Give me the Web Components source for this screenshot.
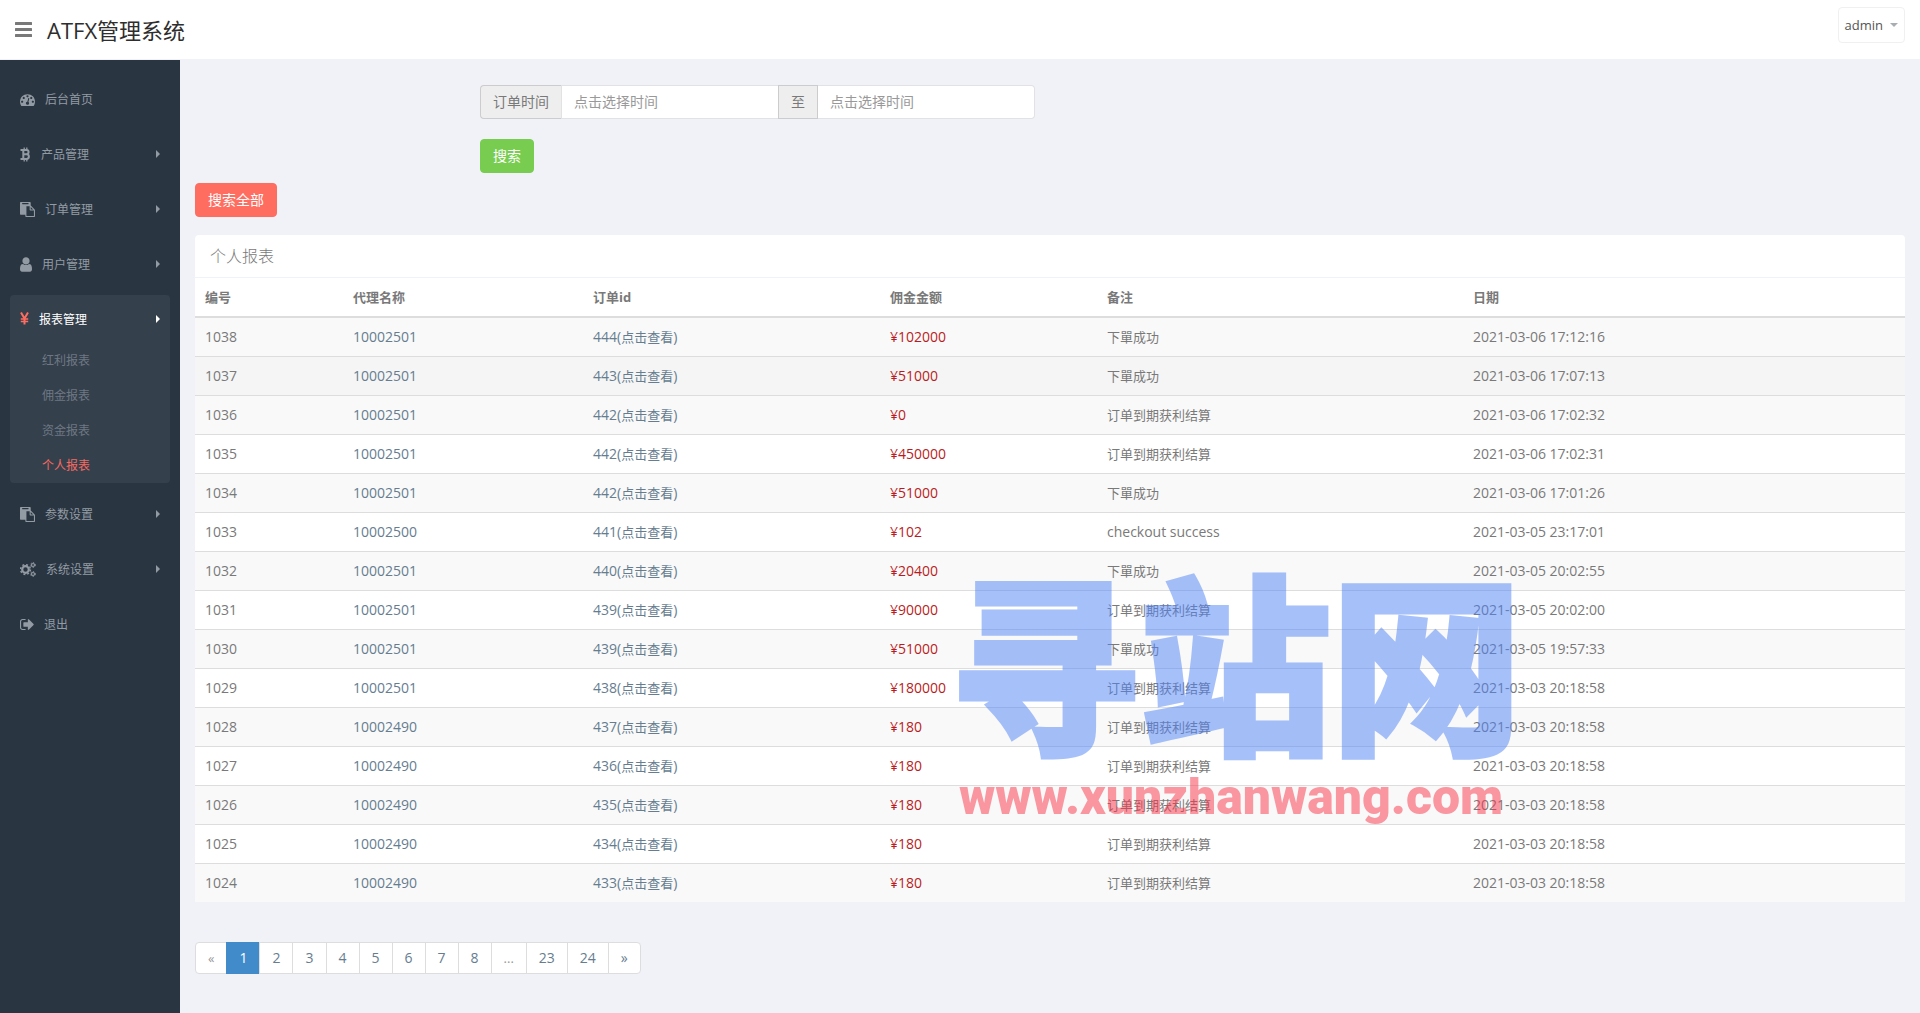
<!DOCTYPE html>
<html lang="zh-CN">
<head>
<meta charset="utf-8">
<title>ATFX管理系统</title>
<style>
body { margin: 0; font: 13px/20px "Open Sans", "Noto Sans CJK SC", sans-serif; color: #797979; background: #f1f2f7; }
</style>
</head>
<body>
<admin-page>
  <top-bar slot="top" user="admin">ATFX管理系统</top-bar>
  <side-menu slot="side">
    <menu-item icon="dashboard">后台首页</menu-item>
    <menu-item icon="bitcoin" more>产品管理</menu-item>
    <menu-item icon="paste" more>订单管理</menu-item>
    <menu-item icon="user" more>用户管理</menu-item>
    <menu-item icon="yen" more active>报表管理
      <sub-item slot="sub">红利报表</sub-item>
      <sub-item slot="sub">佣金报表</sub-item>
      <sub-item slot="sub">资金报表</sub-item>
      <sub-item slot="sub" active>个人报表</sub-item>
    </menu-item>
    <menu-item icon="paste" more>参数设置</menu-item>
    <menu-item icon="cogs" more>系统设置</menu-item>
    <menu-item icon="signout">退出</menu-item>
  </side-menu>
  <search-form></search-form>
  <report-card>个人报表</report-card>
  <page-nav></page-nav>
</admin-page>

<script>
const define = (name, html, setup) => customElements.define(name, class extends HTMLElement {
  constructor() {
    super();
    this.attachShadow({ mode: 'open' });
  }
  connectedCallback() {
    if (this.shadowRoot.childNodes.length) return;
    const base = '<style>*{box-sizing:border-box}a{text-decoration:none;color:inherit}button,input{font:inherit;margin:0}</style>';
    this.shadowRoot.innerHTML = base + (typeof html === 'function' ? html(this) : html);
    if (setup) setup(this);
  }
});

const icons = {
  dashboard: [15, '0 128 1792 1536', '<path d="M384 1152q0-53-37.5-90.5t-90.5-37.5-90.5 37.5-37.5 90.5 37.5 90.5 90.5 37.5 90.5-37.5 37.5-90.5zm192-448q0-53-37.5-90.5t-90.5-37.5-90.5 37.5-37.5 90.5 37.5 90.5 90.5 37.5 90.5-37.5 37.5-90.5zm428 481l101-382q6-26-7.5-48.5t-38.5-29.5-48 6.5-30 39.5l-101 382q-60 5-107 43.5t-63 98.5q-20 77 20 146t117 89 146-20 89-117q16-60-6-117t-72-91zm660-33q0-53-37.5-90.5t-90.5-37.5-90.5 37.5-37.5 90.5 37.5 90.5 90.5 37.5 90.5-37.5 37.5-90.5zm-640-640q0-53-37.5-90.5t-90.5-37.5-90.5 37.5-37.5 90.5 37.5 90.5 90.5 37.5 90.5-37.5 37.5-90.5zm448 192q0-53-37.5-90.5t-90.5-37.5-90.5 37.5-37.5 90.5 37.5 90.5 90.5 37.5 90.5-37.5 37.5-90.5zm320 448q0 261-141 483-19 29-54 29h-1402q-35 0-54-29-141-221-141-483 0-182 71-348t191-286 286-191 348-71 348 71 286 191 191 286 71 348z"/>'],
  bitcoin: [11, '0 0 11 15', '<path fill="none" stroke="currentColor" stroke-width="2" d="M.5 3H6.500a2 2 0 0 1 0 4.200H3.500M6.500 7.200a2.400 2.400 0 0 1 0 4.800H.5M3.300 3v9"/><path fill="none" stroke="currentColor" stroke-width="1.300" d="M4.200.5v2.500M6.800.5v2.500M4.200 12v2.500M6.800 12v2.500"/>'],
  paste: [15, '0 0 1792 1792', '<path d="M768 1664h896v-640h-416q-40 0-68-28t-28-68v-416h-384v1152zm256-1440v-64q0-13-9.500-22.500t-22.500-9.500h-704q-13 0-22.500 9.500t-9.500 22.500v64q0 13 9.500 22.500t22.500 9.500h704q13 0 22.500-9.500t9.500-22.500zm256 672h299l-299-299v299zm512 128v672q0 40-28 68t-68 28h-960q-40 0-68-28t-28-68v-160h-544q-40 0-68-28t-28-68v-1344q0-40 28-68t68-28h1088q40 0 68 28t28 68v328q21 13 36 28l408 408q28 28 48 76t20 88z"/>'],
  user: [12, '256 128 1280 1536', '<path d="M1536 1399q0 109-62.500 187t-150.500 78h-854q-88 0-150.500-78t-62.500-187q0-85 8.500-160.500t31.500-152 58.500-131 94-89 134.500-34.500q131 128 313 128t313-128q76 0 134.500 34.500t94 89 58.500 131 31.500 152 8.500 160.500zm-256-887q0 159-112.500 271.500t-271.500 112.500-271.500-112.500-112.500-271.500 112.500-271.500 271.500-112.500 271.500 112.500 112.500 271.500z"/>'],
  yen: [9, '0 0 9 14', '<path fill="none" stroke="currentColor" stroke-width="2" d="M1 0L4.500 6 8 0M4.500 5.500V12"/><path fill="none" stroke="currentColor" stroke-width="1.300" d="M.8 6.500h7.400M.8 9h7.400"/>'],
  cogs: [16, '0 0 16 15', '<g fill="none" stroke="currentColor"><circle cx="5.500" cy="7.500" r="3.300" stroke-width="2.200"/><circle cx="5.500" cy="7.500" r="4.900" stroke-width="1.500" stroke-dasharray="1.925 1.924"/><circle cx="13" cy="3" r="1.500" stroke-width="1.200"/><circle cx="13" cy="3" r="2.400" stroke-width="1" stroke-dasharray="1.257 1.256"/><circle cx="13" cy="12" r="1.500" stroke-width="1.200"/><circle cx="13" cy="12" r="2.400" stroke-width="1" stroke-dasharray="1.257 1.256"/></g>'],
  signout: [14, '64 256 1600 1280', '<path d="M704 1440q0 4 1 20t.5 26.500-3 23.500-10 19.500-20.500 6.500h-320q-119 0-203.500-84.500t-84.500-203.500v-704q0-119 84.500-203.500t203.500-84.500h320q13 0 22.500 9.500t9.500 22.500q0 4 1 20t.5 26.500-3 23.500-10 19.500-20.500 6.500h-320q-66 0-113 47t-47 113v704q0 66 47 113t113 47h312l11.500 1 11.500 3 8 5.500 7 9 2 13.500zm928-544q0 26-19 45l-544 544q-19 19-45 19t-45-19-19-45v-288h-448q-26 0-45-19t-19-45v-384q0-26 19-45t45-19h448v-288q0-26 19-45t45-19 45 19l544 544q19 19 19 45z"/>']
};
const icon = name => {
  const [w, box, body] = icons[name];
  return `<svg class="icon" width="${w}" height="15" viewBox="${box}" fill="currentColor" aria-hidden="true">${body}</svg>`;
};

define('admin-page', `
<style>
:host { display: grid; grid-template: auto 1fr / 180px minmax(0, 1fr); min-height: 100vh; }
slot[name=top] { display: block; grid-column: 1 / -1; }
slot[name=side] { display: block; background: #2a3542; }
main { padding: 25px 15px 0; }
</style>
<slot name="top"></slot><slot name="side"></slot><main><slot></slot></main>`);

define('top-bar', el => `
<style>
:host { display: block; }
header { display: flex; align-items: center; gap: 15px; height: 60px; padding: 0 15px; background: #fff; border-bottom: 1px solid #f1f2f7; }
button { border: 0; background: none; cursor: pointer; }
.toggle { padding: 0; color: #797979; display: flex; }
.name { font-size: 22px; line-height: 30px; color: #2e2e2e; }
.user { display: flex; align-items: center; gap: 7px; height: 36px; margin: 0 0 10px auto; padding: 0 6px; border: 1px solid #f0f0f0; border-radius: 4px; color: #555; }
</style>
<header>
  <button class="toggle" aria-label="菜单"><svg width="17" height="15" viewBox="0 0 17 15" fill="currentColor"><rect width="17" height="3" y="0" rx=".5"/><rect width="17" height="3" y="6" rx=".5"/><rect width="17" height="3" y="12" rx=".5"/></svg></button>
  <a class="name" href="#"><slot></slot></a>
  <button class="user">${el.getAttribute('user')}<svg width="8" height="4" viewBox="0 0 8 4" fill="#a9adb1" aria-hidden="true"><path d="M0 0h8L4 4z"/></svg></button>
</header>`);

define('side-menu', `
<style>
:host { display: block; }
nav { display: flex; flex-direction: column; gap: 7px; padding: 15px 10px; font-size: 12px; color: #929ba3; }
</style>
<nav><slot></slot></nav>`);

define('menu-item', el => `
<style>
:host { display: block; border-radius: 4px; }
:host([active]) { background: #35404d; }
a { display: flex; align-items: center; gap: 10px; height: 48px; padding: 0 10px; }
a span { padding-top: 2px; }
:host([active]) a { color: #fff; }
:host([active]) .icon { color: #ff6c60; }
.caret { margin-left: auto; }
</style>
<a href="#">${icon(el.getAttribute('icon'))}<span><slot></slot></span>${el.hasAttribute('more') ? '<svg class="caret" width="4" height="8" viewBox="0 0 4 8" fill="currentColor" aria-hidden="true"><path d="M0 0v8l4-4z"/></svg>' : ''}</a>
<slot name="sub"></slot>`);

define('sub-item', `
<style>
:host { display: block; color: #6e7883; }
:host([active]) { color: #f76a60; }
a { display: block; padding-left: 32px; line-height: 35px; }
</style>
<a href="#"><slot></slot></a>`);

define('search-form', `
<style>
:host { display: block; font-size: 14px; }
form { margin-left: calc(100% / 6); width: calc(100% / 3 - 15px); display: grid; gap: 20px; justify-items: start; }
.group { display: flex; width: 100%; height: 34px; }
label { display: flex; align-items: center; flex: none; padding: 0 12px; background: #eee; border: 1px solid #ccc; }
label:first-child { border-right: 0; border-radius: 4px 0 0 4px; }
input { flex: 1; min-width: 0; padding: 0 12px; border: 1px solid #e2e2e4; background: #fff; color: #797979; }
input:last-child { border-left: 0; border-radius: 0 4px 4px 0; }
input:nth-child(2) { border-right: 0; }
input::placeholder { color: #999; }
button { height: 34px; padding: 0 12px; border: 1px solid #78cd51; border-radius: 4px; background: #78cd51; color: #fff; }
.all { display: block; margin-top: 10px; border-color: #ff6c60; background: #ff6c60; }
</style>
<form>
  <div class="group"><label for="from">订单时间</label><input id="from" placeholder="点击选择时间"><label for="to">至</label><input id="to" placeholder="点击选择时间"></div>
  <button type="button">搜索</button>
</form>
<button class="all" type="button">搜索全部</button>`);

const ok = '下單成功', settle = '订单到期获利结算';
const rows = [
  [1038, 10002501, 444, 102000, ok, '2021-03-06 17:12:16'],
  [1037, 10002501, 443, 51000, ok, '2021-03-06 17:07:13'],
  [1036, 10002501, 442, 0, settle, '2021-03-06 17:02:32'],
  [1035, 10002501, 442, 450000, settle, '2021-03-06 17:02:31'],
  [1034, 10002501, 442, 51000, ok, '2021-03-06 17:01:26'],
  [1033, 10002500, 441, 102, 'checkout success', '2021-03-05 23:17:01'],
  [1032, 10002501, 440, 20400, ok, '2021-03-05 20:02:55'],
  [1031, 10002501, 439, 90000, settle, '2021-03-05 20:02:00'],
  [1030, 10002501, 439, 51000, ok, '2021-03-05 19:57:33'],
  [1029, 10002501, 438, 180000, settle, '2021-03-03 20:18:58'],
  [1028, 10002490, 437, 180, settle, '2021-03-03 20:18:58'],
  [1027, 10002490, 436, 180, settle, '2021-03-03 20:18:58'],
  [1026, 10002490, 435, 180, settle, '2021-03-03 20:18:58'],
  [1025, 10002490, 434, 180, settle, '2021-03-03 20:18:58'],
  [1024, 10002490, 433, 180, settle, '2021-03-03 20:18:58']
];

define('report-card', `
<style>
:host { display: block; position: relative; margin-top: 18px; }
section { background: #fff; border-radius: 4px 4px 0 0; }
h2 { margin: 0; padding: 11px 15px; border-bottom: 1px solid #eff2f7; font-size: 16px; line-height: 20px; font-weight: 300; }
table { width: 100%; border-collapse: separate; border-spacing: 0; table-layout: fixed; }
th, td { padding: 9px 10px; line-height: 20px; text-align: left; white-space: nowrap; }
th { font-weight: 700; border-bottom: 2px solid #ddd; }
td { font-size: 14px; border-top: 1px solid #ddd; }
td small { font-size: 13px; }
tbody tr:first-child td { border-top: 0; }
tbody tr:nth-child(odd) { background: #f9f9f9; }
tbody tr:nth-child(2) { background: #f5f5f5; }
td a { color: #667d90; }
.sum { color: #b81c22; }
</style>
<section>
  <h2><slot></slot></h2>
  <table>
    <colgroup><col style="width:8.65%"><col style="width:14.04%"><col style="width:17.37%"><col style="width:12.69%"><col style="width:21.4%"><col></colgroup>
    <thead><tr><th>编号</th><th>代理名称</th><th>订单id</th><th>佣金金额</th><th>备注</th><th>日期</th></tr></thead>
    <tbody>${rows.map(([id, agent, order, sum, note, date]) => `<tr><td>${id}</td><td><a href="#">${agent}</a></td><td><a href="#">${order}(<small>点击查看</small>)</a></td><td class="sum">¥${sum}</td><td>${note[0] === 'c' ? note : `<small>${note}</small>`}</td><td>${date}</td></tr>`).join('')}</tbody>
  </table>
</section>
<site-mark></site-mark>`);

define('site-mark', `
<style>
:host { position: absolute; left: 764px; top: 301px; pointer-events: none; white-space: nowrap; opacity: .5; }
.zh { margin-left: -10px; font: 900 191px/240px "Noto Sans CJK SC", sans-serif; color: #4f83f7; -webkit-text-stroke: 5px #4f83f7; }
.url { font: 900 50px/42px Roboto, "Liberation Sans", sans-serif; color: #f93549; }
</style>
<div class="zh">寻站网</div><div class="url">www.xunzhanwang.com</div>`);

define('page-nav', `
<style>
:host { display: block; padding: 40px 0; }
nav { display: flex; }
a, span { height: 32px; padding: 5px 12px; border: 1px solid #ddd; margin-left: -1px; background: #fff; color: #667d90; font-size: 14px; line-height: 20px; }
span { color: #999; font-size: 13px; }
:first-child { margin-left: 0; border-radius: 4px 0 0 4px; }
:last-child { border-radius: 0 4px 4px 0; }
a[aria-current] { background: #428bca; border-color: #428bca; color: #fff; }
</style>
<nav aria-label="分页"><span>«</span>${[1, 2, 3, 4, 5, 6, 7, 8, '...', 23, 24, '»'].map(p => p === '...' ? '<span>...</span>' : `<a href="#"${p === 1 ? ' aria-current="page"' : ''}>${p}</a>`).join('')}</nav>`);
</script>
</body>
</html>
